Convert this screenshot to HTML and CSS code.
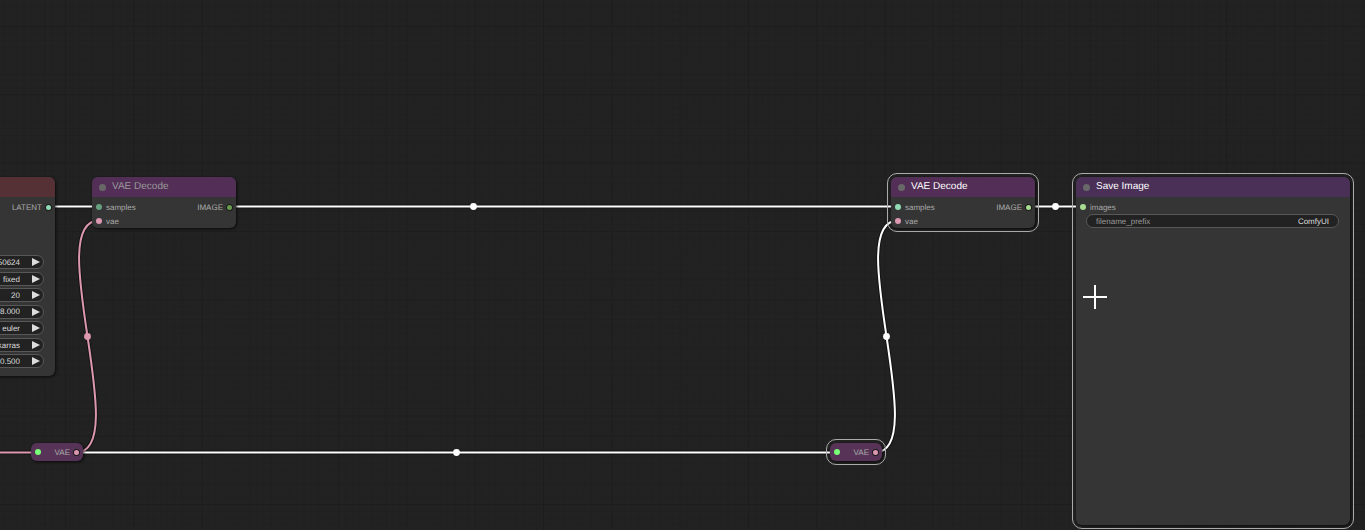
FILE: index.html
```html
<!DOCTYPE html>
<html lang="en">
<head>
<meta charset="utf-8">
<title>Node graph</title>
<link rel="stylesheet" href="styles.css">
</head>
<body>
<main class="canvas">
  <svg class="layer" aria-hidden="true">
    <defs>
      <pattern id="grid" x="65" y="26" width="68.3" height="68.3" patternUnits="userSpaceOnUse">
        <path class="grid-minor" d="M7.5 0V69M14.5 0V69M20.5 0V69M27.5 0V69M34.5 0V69M41.5 0V69M48.5 0V69M54.5 0V69M61.5 0V69M0 7.5H69M0 14.5H69M0 20.5H69M0 27.5H69M0 34.5H69M0 41.5H69M0 48.5H69M0 54.5H69M0 61.5H69"/>
        <path class="grid-major" d="M.5 0V69M0 .5H69"/>
      </pattern>
    </defs>
    <rect width="100%" height="100%" fill="url(#grid)"/>
    <g class="link-shadow">
      <path d="M48 206.5H898M1028 206.5H1082M-10 452.5H38M76 452.5H837"/>
      <path d="M76 452.5C134 452.5 41 220.5 99 220.5"/>
      <path d="M875 452.5C933 452.5 840 220.5 898 220.5"/>
    </g>
    <g class="link">
      <path d="M48 206.5H898M1028 206.5H1082M76 452.5H837"/>
      <path class="pink-link" d="M-10 452.5H38M76 452.5C134 452.5 41 220.5 99 220.5"/>
      <path d="M875 452.5C933 452.5 840 220.5 898 220.5"/>
    </g>
    <g fill="#fff">
      <circle cx="473.5" cy="206.5" r="3.4"/><circle cx="1055.5" cy="206.5" r="3.4"/>
      <circle cx="456.5" cy="452.5" r="3.4"/><circle cx="886.5" cy="336.5" r="3.4"/>
      <circle cx="87.5" cy="336.5" r="3.4" fill="#dc98b0"/>
    </g>
  </svg>

  <section class="node sampler">
    <header class="title red"></header>
    <div class="slots"><div class="slot end"><span>LATENT</span><i class="dot out mint"></i></div></div>
    <div class="widgets">
      <div class="widget"><input aria-label="seed" value="50624"><button aria-label="Increase seed"><svg viewBox="0 0 8 8"><path d="M0 0L8 4L0 8Z"/></svg></button></div>
      <div class="widget"><select aria-label="control after generate"><option>fixed</option></select><button aria-label="Next control"><svg viewBox="0 0 8 8"><path d="M0 0L8 4L0 8Z"/></svg></button></div>
      <div class="widget"><input aria-label="steps" value="20"><button aria-label="Increase steps"><svg viewBox="0 0 8 8"><path d="M0 0L8 4L0 8Z"/></svg></button></div>
      <div class="widget"><input aria-label="cfg" value="8.000"><button aria-label="Increase cfg"><svg viewBox="0 0 8 8"><path d="M0 0L8 4L0 8Z"/></svg></button></div>
      <div class="widget"><select aria-label="sampler name"><option>euler</option></select><button aria-label="Next sampler"><svg viewBox="0 0 8 8"><path d="M0 0L8 4L0 8Z"/></svg></button></div>
      <div class="widget"><select aria-label="scheduler"><option>karras</option></select><button aria-label="Next scheduler"><svg viewBox="0 0 8 8"><path d="M0 0L8 4L0 8Z"/></svg></button></div>
      <div class="widget"><input aria-label="denoise" value="0.500"><button aria-label="Increase denoise"><svg viewBox="0 0 8 8"><path d="M0 0L8 4L0 8Z"/></svg></button></div>
    </div>
  </section>

  <section class="node decode decode-a">
    <header class="title purple"><i class="bulb"></i>VAE Decode</header>
    <div class="slots">
      <div class="slot"><i class="dot teal"></i><span>samples</span><span class="push">IMAGE</span><i class="dot out leaf"></i></div>
      <div class="slot"><i class="dot pink"></i><span>vae</span></div>
    </div>
  </section>

  <section class="node decode decode-b selected">
    <header class="title purple"><i class="bulb"></i>VAE Decode</header>
    <div class="slots">
      <div class="slot"><i class="dot mint"></i><span>samples</span><span class="push">IMAGE</span><i class="dot out lime"></i></div>
      <div class="slot"><i class="dot pink"></i><span>vae</span></div>
    </div>
  </section>

  <section class="node save selected">
    <header class="title violet"><i class="bulb"></i>Save Image</header>
    <div class="slots"><div class="slot"><i class="dot lime"></i><span>images</span></div></div>
    <div class="widget text-widget"><label for="prefix">filename_prefix</label><input id="prefix" value="ComfyUI"></div>
  </section>

  <section class="node reroute reroute-a"><i class="dot green"></i><span class="push">VAE</span><i class="dot out pink"></i></section>
  <section class="node reroute reroute-b selected"><i class="dot green"></i><span class="push">VAE</span><i class="dot out pink"></i></section>

  <svg class="crosshair" viewBox="0 0 24 24" aria-hidden="true"><path d="M0 12H24M12 0V24"/></svg>
</main>
</body>
</html>
```
FILE: styles.css
```css
* { box-sizing: border-box; }
body {
  margin: 0;
  background: #222;
  color: #aaa;
  font: 8px/14px "Liberation Sans", Arial, sans-serif;
  text-rendering: geometricPrecision;
}
.canvas { position: relative; height: 100vh; overflow: hidden; }
.layer { position: absolute; inset: 0; width: 100%; height: 100%; }
.grid-minor { stroke: #202020; stroke-opacity: .7; shape-rendering: crispEdges; }
.grid-major { stroke: #1d1d1d; shape-rendering: crispEdges; }
.link, .link-shadow { fill: none; stroke: #fff; stroke-width: 2; }
.link-shadow { stroke: #000; stroke-opacity: .45; stroke-width: 4; }
.pink-link { stroke: #dc98b0; }

/* Nodes on the free canvas */
.node {
  position: absolute;
  border-radius: 6px;
  background: #353535;
  box-shadow: 1px 1px 3px rgba(0, 0, 0, .7);
}
.sampler { left: -160px; top: 177px; width: 215px; padding-bottom: 8px; }
.decode { top: 177px; width: 144px; }
.decode-a { left: 92px; }
.decode-b { left: 891px; }
.save { left: 1076px; top: 177px; width: 274px; height: 348px; }
.selected { outline: 1px solid #aaa; outline-offset: 3px; }

.title {
  display: flex;
  align-items: center;
  gap: 6px;
  height: 20px;
  padding: 0 7px;
  border-radius: 6px 6px 0 0;
  color: #999;
  font-size: 10px;
}
.selected .title { color: #fff; }
.red { background: #553034; }
.purple { background: #532f57; }
.violet { background: #4a3057; }
.bulb { width: 7px; height: 7px; border-radius: 50%; background: #686868; }

.slots { padding: 3px 4px 0; }
.slot { display: flex; align-items: center; gap: 4px; height: 14px; }
.slot span, .reroute span { padding-top: 1px; }
.end { justify-content: flex-end; }
.push { margin-left: auto; }
.dot { flex: none; width: 6px; height: 6px; border-radius: 50%; }
.out { width: 5px; height: 5px; box-shadow: 0 0 0 1px #1c1c1c; }
.mint { background: #91dcb4; }
.teal { background: #65a180; }
.leaf { background: #6a9c50; }
.lime { background: #a8dc91; }
.pink { background: #dc98b0; }
.green { background: #7f7; }

.reroute {
  display: flex;
  align-items: center;
  gap: 4px;
  top: 443px;
  width: 52px;
  height: 18px;
  padding: 0 4px;
  background: #573457;
}
.reroute-a { left: 31px; }
.reroute-b { left: 830px; }

/* Widgets */
.widgets {
  display: flex;
  flex-direction: column;
  justify-content: space-between;
  height: 113px;
  margin: 41px 11px 0;
}
.widget {
  display: flex;
  align-items: center;
  height: 14px;
  padding: 0 3px 0 8px;
  border: 1px solid #585858;
  border-radius: 7px;
  background: #222;
}
.widget input, .widget select {
  flex: 1;
  min-width: 0;
  height: 12px;
  margin: 0;
  padding: 1px 0 0;
  border: 0;
  outline: 0;
  background: none;
  color: #ddd;
  font: inherit;
  line-height: 12px;
  text-align: right;
  text-align-last: right;
  text-rendering: inherit;
  appearance: none;
}
.widget label { padding-top: 1px; }
.widget button {
  display: flex;
  width: 20px;
  padding: 0 0 0 12px;
  border: 0;
  background: none;
}
.widget button svg { width: 8px; height: 8px; fill: #ddd; }
.text-widget { margin: 0 11px 0 10px; padding: 0 9px; color: #999; }

.crosshair {
  position: absolute;
  left: 1083px;
  top: 285px;
  width: 24px;
  height: 24px;
  fill: none;
  stroke: #fff;
  stroke-width: 2;
}
```
